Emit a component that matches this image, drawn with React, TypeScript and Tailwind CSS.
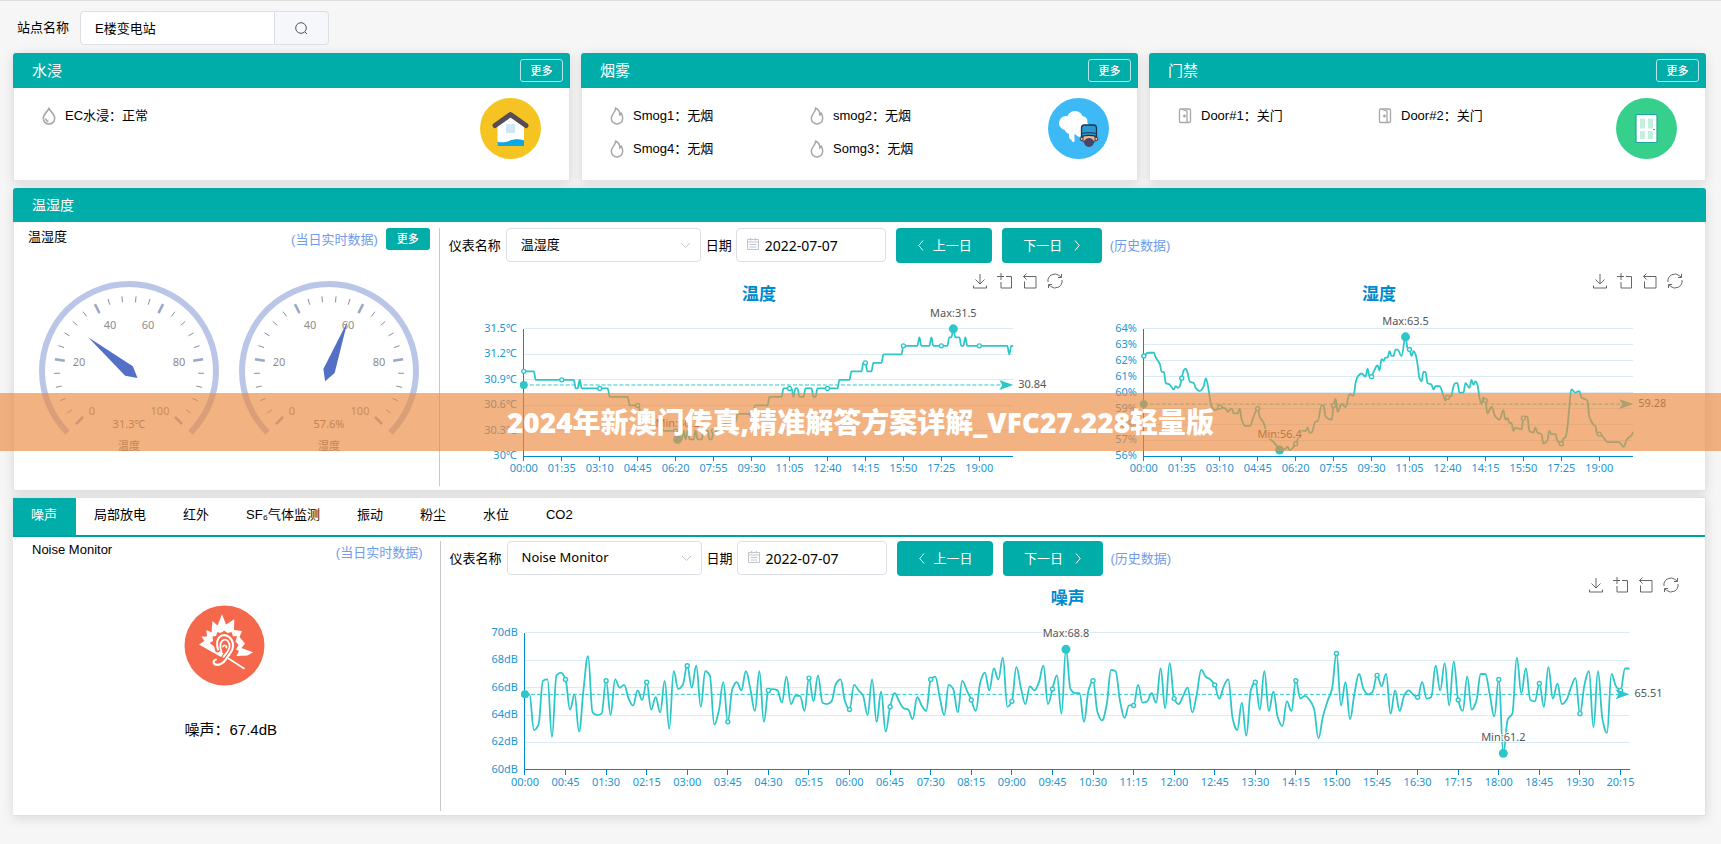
import type { ReactNode } from 'react';
import { clsx } from 'clsx';

type Point = [number, number];

interface ChartProps {
  title: string;
  unit: string;
  width: number;
  plotHeight: number;
  min: number;
  max: number;
  step: number;
  points: Point[];
  labelEvery: number;
  average: number;
  maxAt: Point;
  minAt: Point;
}

const LAST_INDEX = 245;

// [index of the 5 minute sample, value]
const temperature: Point[] = [
  [0, 31], [5, 31], [6, 30.9], [25, 30.9], [26, 30.8], [27, 30.8], [28, 30.9], [29, 30.8], [42, 30.8],
  [43, 30.7], [52, 30.7], [53, 30.6], [57, 30.6], [59, 30.5], [64, 30.5], [65, 30.4], [69, 30.4], [70, 30.3],
  [76, 30.3], [77, 30.2], [79, 30.2], [80, 30.3], [81, 30.2], [82, 30.3], [83, 30.2], [85, 30.2], [86, 30.3],
  [87, 30.2], [89, 30.2], [90, 30.3], [92, 30.3], [93, 30.2], [94, 30.2], [95, 30.3], [100, 30.3], [101, 30.4],
  [106, 30.4], [107, 30.5], [114, 30.5], [116, 30.6], [122, 30.6], [123, 30.7], [129, 30.7], [130, 30.8],
  [133, 30.8], [134, 30.8], [135, 30.7], [136, 30.8], [137, 30.8], [138, 30.7], [140, 30.7], [141, 30.8],
  [144, 30.8], [145, 30.7], [146, 30.7], [147, 30.8], [157, 30.8], [158, 30.9], [163, 30.9], [164, 31],
  [169, 31], [170, 31.1], [171, 31.1], [172, 31], [174, 31], [175, 31.1], [179, 31.1], [180, 31.2],
  [189, 31.2], [190, 31.3], [197, 31.3], [198, 31.4], [199, 31.3], [203, 31.3], [204, 31.4], [205, 31.3],
  [212, 31.3], [213, 31.4], [214, 31.4], [215, 31.5], [216, 31.4], [218, 31.4], [219, 31.3], [220, 31.3],
  [221, 31.4], [222, 31.3], [242, 31.3], [243, 31.2], [244, 31.3], [245, 31.3],
];

const humidity: Point[] = [
  [0, 62.3], [2, 62.5], [5, 62.5], [6, 62.2], [8, 61.8], [9, 61.3], [10, 61.3], [11, 60.6], [13, 60.5],
  [15, 60.2], [16, 60.4], [17, 60.3], [18, 60.4], [19, 60.9], [20, 61.4], [21, 61.5], [22, 61.2], [23, 60.7],
  [25, 60.6], [26, 60.3], [28, 60.1], [30, 60.4], [31, 60.9], [32, 60.5], [33, 59.7], [34, 59.1], [36, 58.9],
  [38, 59.1], [41, 59], [42, 58.8], [44, 59], [45, 58.7], [47, 58.7], [48, 59], [49, 58.3], [51, 57.9],
  [53, 57.9], [55, 58.5], [57, 59], [58, 58.5], [60, 58.1], [61, 57.7], [63, 57.1], [65, 56.9], [67, 56.6],
  [68, 56.4], [69, 56.4], [71, 56.5], [72, 56.6], [73, 56.4], [75, 56.6], [76, 56.8], [78, 57.3], [79, 57.6],
  [81, 57.6], [82, 57.8], [83, 57.5], [84, 57.5], [86, 58.2], [87, 58.2], [89, 59.2], [90, 59.2], [91, 58.5],
  [94, 58.3], [95, 59.2], [96, 59.6], [97, 58.8], [99, 59.3], [101, 59.1], [103, 59.9], [105, 59.8],
  [106, 60.6], [107, 61], [109, 61.2], [111, 61], [112, 61.5], [113, 61], [114, 61], [115, 61.3], [117, 61.7],
  [118, 61.4], [119, 62.1], [120, 62], [121, 62.2], [122, 62.2], [123, 62.6], [124, 62.3], [125, 62.3],
  [126, 62.7], [127, 62.7], [129, 62.3], [131, 63.5], [132, 62.8], [133, 62.7], [134, 62.3], [135, 62.6],
  [136, 62.4], [137, 61.8], [138, 60.9], [139, 60.7], [140, 61.3], [141, 61.3], [142, 60.6], [144, 60.5],
  [145, 60.2], [146, 60.4], [148, 60.4], [150, 59.8], [151, 59.5], [152, 59.7], [154, 59.8], [155, 60.4],
  [156, 60.6], [157, 60.6], [158, 60], [160, 60], [161, 60.6], [163, 60.3], [164, 60.8], [165, 60.5],
  [166, 60.7], [167, 60.5], [168, 59.7], [169, 59.3], [170, 59.7], [171, 59.5], [172, 58.7], [174, 59.1],
  [176, 58.5], [178, 58.3], [180, 58.9], [181, 58.3], [182, 58.4], [183, 58.1], [184, 58.1], [185, 57.6],
  [186, 57.8], [189, 57.7], [190, 58.4], [191, 58.5], [192, 58.5], [193, 57.6], [195, 57.5], [196, 57.8],
  [197, 57.5], [199, 57.4], [200, 56.8], [202, 57], [203, 57.6], [204, 57.4], [206, 57.4], [207, 57],
  [209, 56.8], [210, 57.1], [211, 57.2], [212, 57.8], [213, 59.1], [214, 60.2], [216, 60], [218, 60.1],
  [219, 59.7], [222, 59.5], [223, 58.5], [225, 58], [226, 57.9], [227, 57.4], [228, 57.4], [230, 57.2],
  [232, 56.9], [238, 56.9], [240, 56.6], [242, 57.1], [244, 57.3], [245, 57.5],
];

const noise: Point[] = [
  65.5, 65.5, 62.9, 63.3, 66.5, 66.6, 62.4, 66.9, 67.1, 66.6, 64.4, 65.5, 62.8, 65.9, 68.3, 64.2, 64, 64.1,
  66.5, 64, 66.6, 66, 66.2, 65.2, 64.7, 65.8, 65.1, 66.4, 64.4, 65.3, 64.2, 66.5, 63, 67.2, 65.9, 66.2,
  67.6, 66, 67.6, 64.6, 67.2, 66.9, 63.3, 64.3, 66.4, 63.5, 65.9, 66.4, 65.8, 67.2, 65.9, 64.3, 67.2, 63.5,
  65.8, 65.9, 65.8, 64.9, 66.8, 64.8, 65.4, 65.4, 64.3, 66.7, 65, 66.9, 64.9, 64.8, 65, 66.3, 66.6, 65,
  64.4, 66.2, 65.8, 65.4, 64, 66.6, 63.5, 65.7, 62.8, 64.6, 65.6, 65, 64.5, 64.4, 63.7, 65.3, 64.7, 64.3,
  66.6, 66.8, 65.3, 64, 66.2, 65.9, 64.2, 66.5, 65.8, 65.1, 64.3, 66.4, 67.1, 65.8, 67.4, 66.6, 68.2, 64.6,
  65, 67.5, 66, 64.8, 66.1, 65.8, 66.4, 67.6, 64.8, 65.9, 66.9, 64.1, 68.8, 65.9, 65.6, 65.6, 63.5, 65.8,
  66.5, 64.2, 63.6, 64.7, 67.3, 67.2, 65, 63.8, 64.7, 64.7, 66.2, 64.9, 65, 65.6, 64.9, 67.4, 64.5, 67.8,
  65.2, 64.8, 65.4, 66, 64.2, 65.5, 67.3, 66.8, 66.6, 66.2, 65.2, 66.1, 66.6, 63.7, 62.9, 64.9, 62.5, 65.8,
  66.4, 64.4, 67.2, 64.3, 65.7, 63.8, 63.2, 65, 64.3, 66.5, 65.2, 65.4, 65.1, 64.5, 62.3, 63.9, 65, 65.9,
  68.5, 64.7, 66.4, 63.7, 65.6, 67, 65.9, 65.5, 65.7, 66.9, 66.1, 67, 64.1, 65.8, 64.3, 65.4, 65.8, 65.5,
  65.3, 66.4, 65.2, 65.3, 67.6, 65.8, 67.8, 64.7, 67.9, 65.1, 64.3, 66.8, 64.4, 65, 67, 67, 65.5, 63.9,
  66.6, 61.2, 63.7, 64.1, 68.2, 65.6, 67.4, 65.1, 65, 66.3, 64.6, 67.5, 65.2, 66.3, 64.8, 65.1, 66, 66.7,
  64.1, 66.2, 67.2, 63.1, 67.2, 63.7, 62.7, 67, 66.1, 65.8, 67.4, 67.4,
].map((value, index): Point => [index, value]);

function smoothPath(pts: Point[]) {
  const slope = (i: number) => {
    if (i === 0 || i === pts.length - 1) return 0;
    const left = (pts[i][1] - pts[i - 1][1]) / (pts[i][0] - pts[i - 1][0]);
    const right = (pts[i + 1][1] - pts[i][1]) / (pts[i + 1][0] - pts[i][0]);
    if (left * right <= 0) return 0;
    return (2 * left * right) / (left + right);
  };
  let d = `M${pts[0][0]} ${pts[0][1]}`;
  for (let i = 1; i < pts.length; i++) {
    const [x0, y0] = pts[i - 1];
    const [x1, y1] = pts[i];
    const dx = (x1 - x0) * 0.4;
    d += `C${x0 + dx} ${y0 + slope(i - 1) * dx} ${x1 - dx} ${y1 - slope(i) * dx} ${x1} ${y1}`;
  }
  return d;
}

function valueAt(points: Point[], index: number) {
  const next = points.findIndex(([i]) => i >= index);
  const [i1, v1] = points[next];
  if (i1 === index) return v1;
  const [i0, v0] = points[next - 1];
  return v0 + ((v1 - v0) * (index - i0)) / (i1 - i0);
}

function clock(index: number) {
  const minutes = index * 5;
  const pad = (n: number) => String(n).padStart(2, '0');
  return `${pad(Math.floor(minutes / 60))}:${pad(minutes % 60)}`;
}

const toolboxIcons = [
  { label: '保存为图片', d: 'M8 1v10M3.5 6.5 8 11l4.5-4.5M1.5 12.5V15h13v-2.5' },
  { label: '区域缩放', d: 'M0 3.5h7M4 0v7M9 3.5h5.5V15H4V9' },
  { label: '区域缩放还原', d: 'M4.5.5 1.5 3.5l3 3M1.500 3.500h12.500V15H2.500V8.500' },
  { label: '还原', d: 'M1 9a7 7 0 0 1 11.500-6.300L14 4M15 7a7 7 0 0 1-11.500 6.300L2 12M14.500 1v3.500H11M1.500 15v-3.500H5' },
];

function Toolbox() {
  return (
    <div className="absolute right-[6px] top-0 flex gap-[9px]">
      {toolboxIcons.map((icon) => (
        <button key={icon.label} type="button" aria-label={icon.label} className="text-[#666]">
          <svg className="h-4 w-4" viewBox="0 0 16 16" fill="none" stroke="currentColor">
            <path d={icon.d} />
          </svg>
        </button>
      ))}
    </div>
  );
}

function LineChart(props: ChartProps) {
  const { title, unit, width, plotHeight, min, max, step, points, labelEvery, average, maxAt, minAt } = props;
  const left = 75;
  const right = width - 56;
  const top = 56;
  const bottom = top + plotHeight;
  const x = (i: number) => left + ((right - left) * i) / LAST_INDEX;
  const y = (v: number) => bottom - ((v - min) / (max - min)) * plotHeight;

  const rows = Array.from({ length: Math.round((max - min) / step) + 1 }, (_, i) => +(min + i * step).toFixed(1));
  const ticks = Array.from({ length: Math.floor(LAST_INDEX / labelEvery) + 1 }, (_, i) => i * labelEvery);
  const avgY = y(average);

  return (
    <div className="relative">
      <svg
        className="block w-full font-['Noto_Sans','Noto_Sans_CJK_SC',sans-serif] text-[11px]"
        viewBox={`0 0 ${width} ${bottom + 30}`}
      >
        <text x={width / 2} y="27" textAnchor="middle" fill="#008acd" className="text-[17px] font-bold">
          {title}
        </text>
        {rows.map((v) => (
          <g key={v}>
            {v !== min && (
              <line x1={left} x2={right} y1={y(v)} y2={y(v)} stroke="#dcebf3" shapeRendering="crispEdges" />
            )}
            <text x={left - 7} y={y(v) + 3} textAnchor="end" fill="#2296d3">
              {v}
              {unit}
            </text>
          </g>
        ))}
        <path d={`M${left} ${top}V${bottom}H${right}`} stroke="#008acd" fill="none" shapeRendering="crispEdges" />
        {ticks.map((i) => (
          <g key={i}>
            <line x1={x(i)} x2={x(i)} y1={bottom} y2={bottom + 5} stroke="#008acd" shapeRendering="crispEdges" />
            <text x={x(i)} y={bottom + 16} textAnchor="middle" fill="#2296d3">
              {clock(i)}
            </text>
          </g>
        ))}
        <path
          d={smoothPath(points.map(([i, v]): Point => [x(i), y(v)]))}
          fill="none"
          stroke="#2ec7c9"
          strokeWidth="1.8"
          strokeLinejoin="round"
        />
        {ticks.map((i) => (
          <circle key={i} cx={x(i)} cy={y(valueAt(points, i))} r="2" fill="#fff" stroke="#2ec7c9" strokeWidth="1.4" />
        ))}
        <line x1={left} x2={right - 8} y1={avgY} y2={avgY} stroke="#2ec7c9" strokeDasharray="4 2" />
        <circle cx={left} cy={avgY} r="4" fill="#2ec7c9" />
        <path d={`M${right} ${avgY}l-14-5 3 5-3 5z`} fill="#2ec7c9" />
        <text x={right + 5} y={avgY + 3} fill="#555">
          {average}
        </text>
        {[maxAt, minAt].map(([i, v], n) => (
          <g key={n}>
            <circle cx={x(i)} cy={y(v)} r="4.500" fill="#2ec7c9" />
            <text x={x(i)} y={y(v) - 12} textAnchor="middle" fill="#555" stroke="#fff" strokeWidth="2" paintOrder="stroke">
              {n === 0 ? 'Max:' : 'Min:'}
              {v}
            </text>
          </g>
        ))}
      </svg>
      <Toolbox />
    </div>
  );
}

function polar(cx: number, cy: number, r: number, deg: number): Point {
  const rad = (deg * Math.PI) / 180;
  return [cx + r * Math.cos(rad), cy - r * Math.sin(rad)];
}

// [value, x, y] on the 200 wide dial
const dialLabels = [
  [0, 63, 144],
  [20, 50, 95],
  [40, 81, 58],
  [60, 119, 58],
  [80, 150, 95],
  [100, 131, 144],
];

function Gauge({ value, unit, name }: { value: number; unit: string; name: string }) {
  const c = 100;
  const [sx, sy] = polar(c, c, 87, 225);
  const [ex, ey] = polar(c, c, 87, -45);
  const angle = 225 - value * 2.7;
  const needle = [
    polar(c, c, 53, angle),
    polar(c, c, 6, angle - 90),
    polar(c, c, 11, angle + 180),
    polar(c, c, 6, angle + 90),
  ];
  return (
    <svg
      className="block w-[200px] font-['Noto_Sans','Noto_Sans_CJK_SC',sans-serif] text-[11px]"
      viewBox="0 0 200 184"
      fill="#8c8c8c"
      textAnchor="middle"
    >
      <path d={`M${sx} ${sy}A87 87 0 1 1 ${ex} ${ey}`} fill="none" stroke="#b9c6e8" strokeWidth="6" />
      {Array.from({ length: 26 }, (_, i) => {
        const major = i % 5 === 0;
        const deg = 225 - i * 10.8;
        const [x1, y1] = polar(c, c, 75, deg);
        const [x2, y2] = polar(c, c, major ? 65 : 69, deg);
        return (
          <line key={i} x1={x1} y1={y1} x2={x2} y2={y2} stroke={major ? '#9aa7c9' : '#8a8f99'} strokeWidth={major ? 2.5 : 1} />
        );
      })}
      {dialLabels.map(([v, lx, ly]) => (
        <text key={v} x={lx} y={ly}>
          {v}
        </text>
      ))}
      <polygon points={needle.map((p) => p.join(',')).join(' ')} fill="#5470c6" />
      <text x={c} y="157" fill="#777">
        {value}
        {unit}
      </text>
      <text x={c} y="179" fill="#777">
        {name}
      </text>
    </svg>
  );
}

function DropIcon() {
  return (
    <svg className="h-[18px] w-[14px]" viewBox="0 0 14 18" fill="none" stroke="#a8a8a8" strokeWidth="1.600">
      <path d="M7 1.500C5 5 1.300 7.500 1.300 11.300a5.700 5.700 0 0 0 11.400 0C12.700 7.500 9 5 7 1.500Z" />
      <path d="M3.800 11.500A3.300 3.300 0 0 0 6.500 14.500" />
    </svg>
  );
}

function FlameIcon() {
  return (
    <svg className="h-[18px] w-[14px]" viewBox="0 0 14 18" fill="none" stroke="#a8a8a8" strokeWidth="1.500" strokeLinejoin="round">
      <path d="M5.500 1C6 5 1.300 7 1.300 11.300a5.700 5.700 0 0 0 11.400 0c0-2-.5-3.600-1.500-5.300L9.800 8.200C10 5 8.500 2.500 5.500 1Z" />
    </svg>
  );
}

function DoorIcon() {
  return (
    <svg className="h-[18px] w-[14px]" viewBox="0 0 14 18" fill="none" stroke="#a8a8a8" strokeWidth="1.300">
      <rect x="1.500" y="2" width="11" height="13.500" rx="1" />
      <path d="M4 2.500 9 4v11.500" />
      <circle cx="6.500" cy="9" r=".8" fill="#a8a8a8" />
    </svg>
  );
}

function HouseBadge() {
  return (
    <svg className="h-[61px] w-[61px]" viewBox="0 0 61 61">
      <circle cx="30.500" cy="30.500" r="30.500" fill="#f5c422" />
      <path d="M17.500 48V27l13-10.500 13.500 10.500v21Z" fill="#fff" />
      <rect x="26" y="26" width="9" height="9" fill="#cfe8f6" />
      <path d="M17.500 43.500c4 1.500 8 .8 12-.8s9-2 14.500-.5V48H17.500Z" fill="#0aa8e8" />
      <path d="M15 27.500 30.500 16.500 46 27.500" fill="none" stroke="#574b57" strokeWidth="5" strokeLinecap="round" strokeLinejoin="round" />
    </svg>
  );
}

function SmokeBadge() {
  return (
    <svg className="h-[61px] w-[61px]" viewBox="0 0 61 61">
      <circle cx="30.500" cy="30.500" r="30.500" fill="#3dbaf6" />
      <g fill="#fff">
        <circle cx="18" cy="25" r="7" />
        <circle cx="27" cy="21" r="8" />
        <circle cx="34" cy="23.500" r="5.500" />
        <path d="M16 27 38 23l3.500 5-4.500 9-6 2-4.500-3c-.5 3 .5 5 0 7.500-1 .8-2.500.5-3-1.500-2-.5-3-3-2.500-6-3-1-5-4-5-7Z" />
      </g>
      <g stroke="#3b3f5c">
        <circle cx="34" cy="41" r="1.800" fill="#f3b48b" />
        <circle cx="48" cy="41" r="1.800" fill="#f3b48b" />
        <path d="M35 37h12v6.500L41 47l-6-3.500Z" fill="#f3b48b" />
      </g>
      <path d="M36 43c1.500-2 3-3 5-3s3.500 1 5 3c.3 3-2 6-5 6s-5.300-3-5-6Z" fill="#454668" />
      <path d="M33.500 38.500V30c0-1.800 1-3 3-3h9c2 0 3 1.200 3 3v8.500c-4-1.500-11-1.500-15 0Z" fill="#2a9bd2" stroke="#26304f" strokeWidth="1.300" />
      <path d="M33.500 35.500c4-1 11-1 15 0" fill="none" stroke="#26304f" />
    </svg>
  );
}

function DoorBadge() {
  return (
    <svg className="h-[61px] w-[61px]" viewBox="0 0 61 61">
      <circle cx="30.500" cy="30.500" r="30.500" fill="#36d08c" />
      <rect x="20" y="16.500" width="21" height="28" rx="1" fill="#fff" stroke="#1aa7a0" strokeWidth="1.200" />
      <g fill="#c5efdc">
        <rect x="24" y="20.500" width="5" height="10" />
        <rect x="32" y="20.500" width="5" height="10" />
        <rect x="24" y="33" width="5" height="8" />
        <rect x="32" y="33" width="5" height="8" />
      </g>
      <path d="M37 31.500h2" stroke="#1aa7a0" />
    </svg>
  );
}

function EarBadge() {
  return (
    <svg className="h-[81px] w-[81px]" viewBox="0 0 81 81">
      <circle cx="40.500" cy="40.500" r="40" fill="#f5684b" />
      <path
        d="M15 39.500 20.500 36 17.300 31.500 23 31.500 22.300 25 27.500 27.500 28.500 16 33.500 20.500 38 9.300 42 19.500 50.300 14.300 50 25 58 26 55.500 32 61 38.500 57.500 43 69 47.300 63.500 50.500 52.300 51 55 46 52 44.500 54.500 40 51.500 36.500 53 31 49 31.500 47.500 27 43.500 28 40 25.500 37 28.500 33.500 27 32 31 28.500 31.500 29 36 25.500 38 39.500 48.500 37 52Z"
        fill="#fff"
      />
      <g fill="none" strokeLinecap="round">
        <path d="M33.500 45c-2-6-1.500-13 4-15 6-1.500 11.500 4 11.500 11 0 5-4 8-6.500 12" stroke="#f5684b" strokeWidth="5" />
        <path d="M34 44.500c-1.800-6-1-12 4-14 6-1.500 11.500 4 11 11-.4 5-4 8-6.500 12-3 5-8.500 8-12 5.500-1.500-1.500-1-4 1.500-4.500" stroke="#fff" strokeWidth="2.200" />
        <path d="M37.500 47c-2-5-1.500-10.500 2-12s6.500 2.500 6 7c-.5 4-4 7-6 10M39 41.500c1.500-2 3.500-1 3.500 1" stroke="#fff" strokeWidth="1.800" />
        <path d="M44.500 53.500 60 63.500" stroke="#fff" strokeWidth="1.600" />
      </g>
    </svg>
  );
}

function StatusCard({ title, items, icon, badge }: { title: string; items: string[]; icon: ReactNode; badge: ReactNode }) {
  return (
    <section className="rounded-t-[3px] shadow-[0_2px_12px_rgba(0,0,0,0.12)]">
      <header className="flex h-[35px] items-center justify-between rounded-t-[3px] bg-[#00ada9] pl-[19px] pr-[7px] text-white">
        <h2 className="text-[15px]">{title}</h2>
        <button type="button" className="h-[23px] w-[43px] rounded-[3px] border border-[#b5e5e4] text-[11px] font-medium">
          更多
        </button>
      </header>
      <div className="flex h-[93px] items-start justify-between border border-t-0 border-[#e4e4e4] bg-white px-7">
        <ul className="grid grid-cols-[200px_200px] pt-[11px]">
          {items.map((item) => (
            <li key={item} className="flex h-[33px] items-center gap-[9px]">
              {icon}
              {item}
            </li>
          ))}
        </ul>
        <div className="pt-[10px]">{badge}</div>
      </div>
    </section>
  );
}

function DayControls({ id, meter }: { id: string; meter: string }) {
  return (
    <div className="flex items-center pl-[9px]">
      <label htmlFor={`${id}-meter`}>仪表名称</label>
      <div className="relative ml-[5px] self-start">
        <select
          id={`${id}-meter`}
          defaultValue={meter}
          className="block h-[34px] w-[195px] appearance-none rounded-[4px] border border-[#dcdfe6] bg-white pb-0.5 pl-[14px] font-['Noto_Sans','Noto_Sans_CJK_SC',sans-serif]"
        >
          <option>{meter}</option>
        </select>
        <svg className="pointer-events-none absolute right-[10px] top-[14px] h-[7px] w-[11px]" viewBox="0 0 11 7" fill="none" stroke="#c0c4cc">
          <path d="M1 1l4.500 4.500L10 1" />
        </svg>
      </div>
      <label htmlFor={`${id}-date`} className="ml-[5px]">
        日期
      </label>
      <div className="relative ml-1 self-start">
        <svg className="absolute left-[11px] top-[10px] h-[12px] w-[12px]" viewBox="0 0 12 12" fill="none" stroke="#c0c4cc">
          <path d="M.5 1.500h11v10H.5ZM.5 4h11M3.500 0v2.500M8.500 0v2.500M2.500 6.500h7M2.500 9h7" />
        </svg>
        <input
          id={`${id}-date`}
          defaultValue="2022-07-07"
          className="block h-[34px] w-[150px] rounded-[4px] border border-[#dcdfe6] pl-7 font-['Noto_Sans',sans-serif] text-[14px]"
        />
      </div>
      <button type="button" className="ml-[10px] flex h-[35px] w-[96px] items-center justify-center gap-[9px] rounded-[4px] bg-[#00ada9] pl-0.5 text-white">
        <svg className="h-[11px] w-[6px]" viewBox="0 0 6 11" fill="none" stroke="currentColor">
          <path d="M5 .5.800 5.500 5 10.500" />
        </svg>
        上一日
      </button>
      <button type="button" className="ml-[10px] flex h-[35px] w-[100px] items-center justify-center gap-[12px] rounded-[4px] bg-[#00ada9] text-white">
        下一日
        <svg className="h-[11px] w-[6px]" viewBox="0 0 6 11" fill="none" stroke="currentColor">
          <path d="M1 .5 5.200 5.500 1 10.500" />
        </svg>
      </button>
      <a href="#history" className="ml-2 text-[#6f9bea]">
        (历史数据)
      </a>
    </div>
  );
}

const tabs = ['噪声', '局部放电', '红外', 'SF₆气体监测', '振动', '粉尘', '水位', 'CO2'];

export default function App() {
  return (
    <div className="relative min-h-screen border-t border-[#dedede] bg-[#f6f6f6] pb-6 pl-[13px] pr-[15px] pt-[10px] font-['Liberation_Sans','Noto_Sans_CJK_SC',sans-serif] text-[13px] leading-[18px] text-black">
      <form className="flex items-center pl-1">
        <label htmlFor="station">站点名称</label>
        <input
          id="station"
          defaultValue="E楼变电站"
          className="ml-[11px] h-[34px] w-[195px] rounded-l-[4px] border border-[#dcdfe6] bg-white pb-0.5 pl-[14px]"
        />
        <button
          type="button"
          aria-label="搜索"
          className="flex h-[34px] w-[54px] items-center justify-center rounded-r-[4px] border border-l-0 border-[#dcdfe6] bg-[#f5f7fa]"
        >
          <svg className="h-[13px] w-[13px]" viewBox="0 0 13 13" fill="none" stroke="#555">
            <circle cx="6" cy="6" r="5.300" />
            <path d="m10 10 2 2" />
          </svg>
        </button>
      </form>

      <div className="mt-2 grid grid-cols-3 gap-[11px]">
        <StatusCard title="水浸" items={['EC水浸：正常']} icon={<DropIcon />} badge={<HouseBadge />} />
        <StatusCard
          title="烟雾"
          items={['Smog1：无烟', 'smog2：无烟', 'Smog4：无烟', 'Somg3：无烟']}
          icon={<FlameIcon />}
          badge={<SmokeBadge />}
        />
        <StatusCard title="门禁" items={['Door#1：关门', 'Door#2：关门']} icon={<DoorIcon />} badge={<DoorBadge />} />
      </div>

      <section className="mt-[7px] rounded-t-[3px] shadow-[0_2px_12px_rgba(0,0,0,0.12)]">
        <header className="flex h-[34px] items-center rounded-t-[3px] bg-[#00ada9] pl-[19px] text-white">
          <h2 className="text-[14px]">温湿度</h2>
        </header>
        <div className="flex border border-t-0 border-[#e4e4e4] bg-white py-1 pl-1 pt-[6px]">
          <div className="w-1/4 border-r border-[#c8c8c8]">
            <div className="flex items-start pl-[10px] pr-[9px]">
              <h3>温湿度</h3>
              <a href="#today" className="ml-auto mt-[3px] text-[#6f9bea]">
                (当日实时数据)
              </a>
              <button type="button" className="ml-2 h-[22px] w-[44px] rounded-[3px] bg-[#00ada9] text-[11px] font-medium text-white">
                更多
              </button>
            </div>
            <div className="mt-[21px] flex pl-[11px]">
              <Gauge value={31.3} unit="℃" name="温度" />
              <Gauge value={57.6} unit="%" name="湿度" />
            </div>
          </div>
          <div className="flex-1">
            <DayControls id="climate" meter="温湿度" />
            <div className="mt-[10px] grid grid-cols-2 pl-[9px] pr-4">
              <LineChart
                title="温度"
                unit="℃"
                width={622}
                plotHeight={128}
                min={30}
                max={31.5}
                step={0.3}
                points={temperature}
                labelEvery={19}
                average={30.84}
                maxAt={[215, 31.5]}
                minAt={[77, 30.2]}
              />
              <LineChart
                title="湿度"
                unit="%"
                width={622}
                plotHeight={128}
                min={56}
                max={64}
                step={1}
                points={humidity}
                labelEvery={19}
                average={59.28}
                maxAt={[131, 63.5]}
                minAt={[68, 56.4]}
              />
            </div>
          </div>
        </div>
      </section>

      <section className="mt-[6px] border border-[#e0e0e0] border-l-0 bg-white shadow-[0_2px_12px_rgba(0,0,0,0.12)]">
        <div role="tablist" className="flex border-b-2 border-[#00a29e]">
          {tabs.map((tab, i) => (
            <button
              key={tab}
              type="button"
              role="tab"
              aria-selected={i === 0}
              className={clsx('h-[37px] pb-[3px] pl-[18px] pr-[19px]', i === 0 && 'bg-[#00ada9] text-white')}
            >
              {tab}
            </button>
          ))}
        </div>
        <div className="flex pb-1 pl-[6px] pt-1">
          <div className="flex w-1/4 flex-col border-r border-[#c8c8c8]">
            <div className="flex items-start pl-[13px] pr-[17px]">
              <h3>Noise Monitor</h3>
              <a href="#noise-today" className="ml-auto mt-[3px] text-[#6f9bea]">
                (当日实时数据)
              </a>
            </div>
            <div className="mt-[43px] flex flex-col items-center pr-[9px]">
              <EarBadge />
              <p className="mt-[35px] pl-3 text-[15px]">噪声：67.4dB</p>
            </div>
          </div>
          <div className="flex-1 pb-[11px]">
            <DayControls id="noise" meter="Noise Monitor" />
            <div className="pl-[9px] pr-5 pt-px">
              <LineChart
                title="噪声"
                unit="dB"
                width={1237}
                plotHeight={137}
                min={60}
                max={70}
                step={2}
                points={noise}
                labelEvery={9}
                average={65.51}
                maxAt={[120, 68.8]}
                minAt={[217, 61.2]}
              />
            </div>
          </div>
        </div>
      </section>

      <div className="pointer-events-none absolute inset-x-0 top-[392px] flex h-[58px] items-center justify-center bg-[#eb8a40]/66 font-['Open_Sans','Noto_Sans_CJK_SC',sans-serif] text-[28px] font-extrabold text-white">
        2024年新澳门传真,精准解答方案详解_VFC27.228轻量版
      </div>
    </div>
  );
}
